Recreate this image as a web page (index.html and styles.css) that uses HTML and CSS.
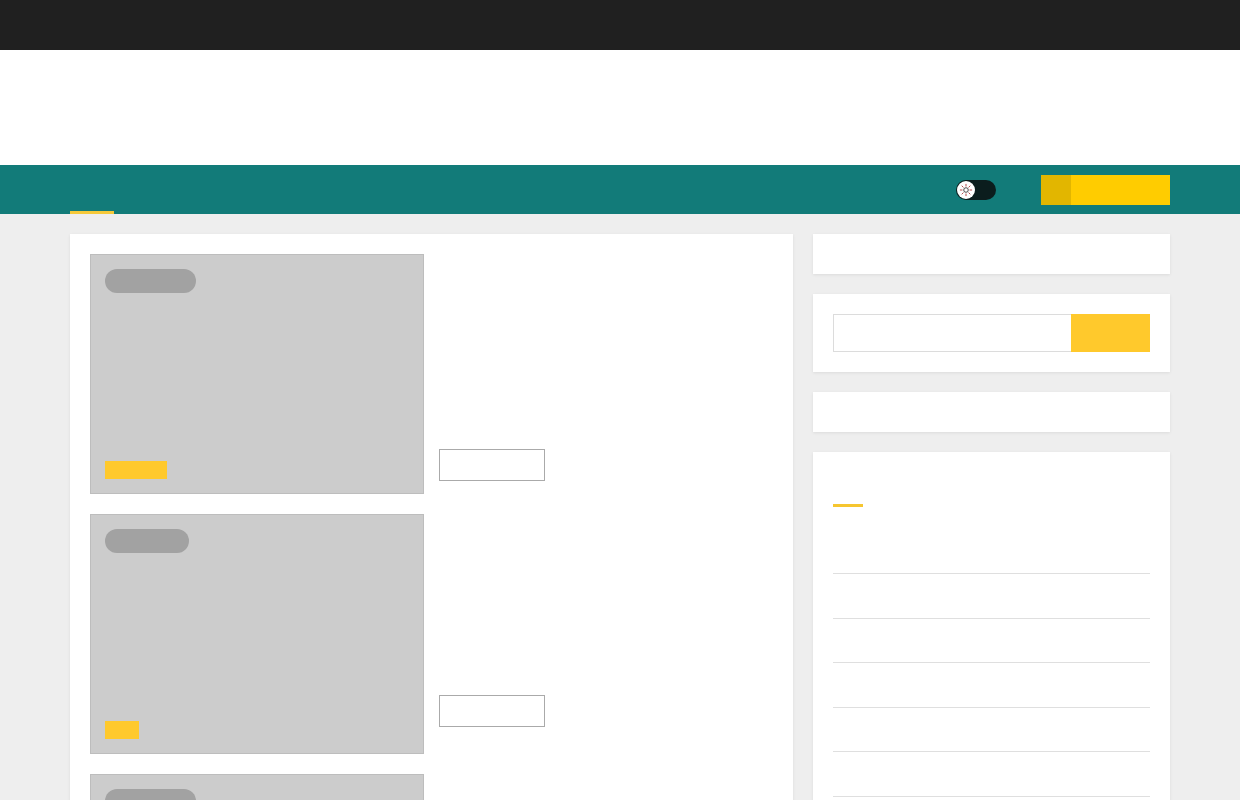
FILE: index.html
```html
<!DOCTYPE html>
<html lang="en">
<head>
<meta charset="utf-8">
<title>News</title>
<link rel="stylesheet" href="styles.css">
</head>
<body>
<div class="topbar"></div>
<header class="masthead"></header>
<nav class="mainnav">
  <div class="wrap nav-inner">
    <ul class="menu">
      <li class="menu-item is-active"></li>
    </ul>
    <div class="nav-tools">
      <span class="mode-switch">
        <span class="mode-knob">
          <svg viewBox="0 0 16 16" width="14" height="14" aria-hidden="true">
            <circle cx="8" cy="8" r="2.6" fill="none" stroke="#333" stroke-width="1"/>
            <g stroke="#a33" stroke-width="1" stroke-linecap="round">
              <line x1="8" y1="1.5" x2="8" y2="3.5"/>
              <line x1="8" y1="12.5" x2="8" y2="14.5"/>
              <line x1="1.5" y1="8" x2="3.5" y2="8"/>
              <line x1="12.5" y1="8" x2="14.5" y2="8"/>
              <line x1="3.4" y1="3.4" x2="4.8" y2="4.8"/>
              <line x1="11.2" y1="11.2" x2="12.6" y2="12.6"/>
              <line x1="3.4" y1="12.6" x2="4.8" y2="11.2"/>
              <line x1="11.2" y1="4.8" x2="12.6" y2="3.4"/>
            </g>
          </svg>
        </span>
      </span>
      <a class="cta"><span class="cta-icon"></span><span class="cta-label"></span></a>
    </div>
  </div>
</nav>

<main class="wrap layout">
  <section class="content card">
    <article class="post">
      <div class="post-thumb">
        <span class="pill pill-wide"></span>
        <span class="tag tag-wide"></span>
      </div>
      <div class="post-body">
        <a class="more"></a>
      </div>
    </article>
    <article class="post">
      <div class="post-thumb">
        <span class="pill pill-mid"></span>
        <span class="tag tag-short"></span>
      </div>
      <div class="post-body post-body--raised">
        <a class="more"></a>
      </div>
    </article>
    <article class="post">
      <div class="post-thumb">
        <span class="pill pill-wide"></span>
        <span class="tag tag-wide"></span>
      </div>
      <div class="post-body">
        <a class="more"></a>
      </div>
    </article>
  </section>

  <aside class="sidebar">
    <div class="card widget widget-slim"></div>
    <div class="card widget widget-search">
      <form class="search">
        <input class="search-field" type="text">
        <button class="search-btn" type="button"></button>
      </form>
    </div>
    <div class="card widget widget-slim"></div>
    <div class="card widget widget-list">
      <div class="widget-title"><span class="title-bar"></span></div>
      <ul class="list">
        <li></li><li></li><li></li><li></li><li></li><li></li><li></li><li></li>
      </ul>
    </div>
  </aside>
</main>
</body>
</html>
```

FILE: styles.css
```css
* { box-sizing: border-box; }

html, body {
  margin: 0;
  padding: 0;
}

body {
  background: #eeeeee;
  font-family: "Roboto", "Liberation Sans", sans-serif;
}

.wrap {
  width: 1100px;
  margin: 0 auto;
}

.topbar {
  height: 50px;
  background: #202020;
}

.masthead {
  height: 115px;
  background: #ffffff;
}

/* main navigation */
.mainnav {
  height: 49px;
  background: #127b79;
}

.nav-inner {
  display: flex;
  align-items: stretch;
  justify-content: space-between;
  height: 100%;
}

.menu {
  list-style: none;
  margin: 0;
  padding: 0;
  display: flex;
}

.menu-item {
  width: 44px;
}

.menu-item.is-active {
  border-bottom: 3px solid #f5c93a;
}

.nav-tools {
  display: flex;
  align-items: center;
  gap: 45px;
}

.mode-switch {
  display: flex;
  align-items: center;
  width: 40px;
  height: 20px;
  border-radius: 10px;
  background: #0b1d1d;
  padding-left: 1px;
}

.mode-knob {
  width: 18px;
  height: 18px;
  border-radius: 50%;
  background: #ffffff;
  display: flex;
  align-items: center;
  justify-content: center;
}

.cta {
  display: flex;
  width: 129px;
  height: 30px;
  background: #ffcc00;
}

.cta-icon {
  width: 30px;
  background: #e2b600;
}

.cta-label {
  flex: 1;
}

/* page body */
.layout {
  display: flex;
  align-items: flex-start;
  gap: 20px;
  padding-top: 20px;
}

.card {
  background: #ffffff;
  box-shadow: 0 1px 3px rgba(0, 0, 0, 0.08);
}

.content {
  width: 723px;
  padding: 20px;
  display: flex;
  flex-direction: column;
  gap: 20px;
}

.post {
  display: flex;
  gap: 15px;
}

.post-thumb {
  width: 334px;
  height: 240px;
  flex-shrink: 0;
  background: #cccccc;
  border: 1px solid #bdbdbd;
  padding: 14px;
  display: flex;
  flex-direction: column;
  justify-content: space-between;
  align-items: flex-start;
}

.pill {
  height: 24px;
  border-radius: 12px;
  background: #a2a2a2;
}

.pill-wide { width: 91px; }
.pill-mid { width: 84px; }

.tag {
  height: 18px;
  background: #ffc92c;
}

.tag-wide { width: 62px; }
.tag-short { width: 34px; }

.post-body {
  flex: 1;
  display: flex;
  flex-direction: column;
  justify-content: flex-end;
  padding-bottom: 13px;
}

.post-body--raised {
  padding-bottom: 27px;
}

.more {
  display: block;
  width: 106px;
  height: 32px;
  border: 1px solid #aaaaaa;
  background: #ffffff;
}

/* sidebar */
.sidebar {
  width: 357px;
  display: flex;
  flex-direction: column;
  gap: 20px;
}

.widget-slim {
  height: 40px;
}

.widget-search {
  padding: 20px;
}

.search {
  display: flex;
  margin: 0;
}

.search-field {
  flex: 1;
  height: 38px;
  border: 1px solid #dcdcdc;
  border-right: none;
  margin: 0;
  padding: 0 10px;
  background: #ffffff;
  outline: none;
}

.search-btn {
  width: 79px;
  height: 38px;
  border: none;
  margin: 0;
  background: #ffc92c;
}

.widget-list {
  padding: 20px;
}

.widget-title {
  height: 58px;
  padding-top: 32px;
}

.title-bar {
  display: block;
  width: 30px;
  height: 3px;
  background: #f6c630;
}

.list {
  list-style: none;
  margin: 0;
  padding: 0;
}

.list li {
  height: 44.6px;
  border-bottom: 1px solid #dfdfdf;
}

.list li:first-child {
  height: 44px;
}
```
